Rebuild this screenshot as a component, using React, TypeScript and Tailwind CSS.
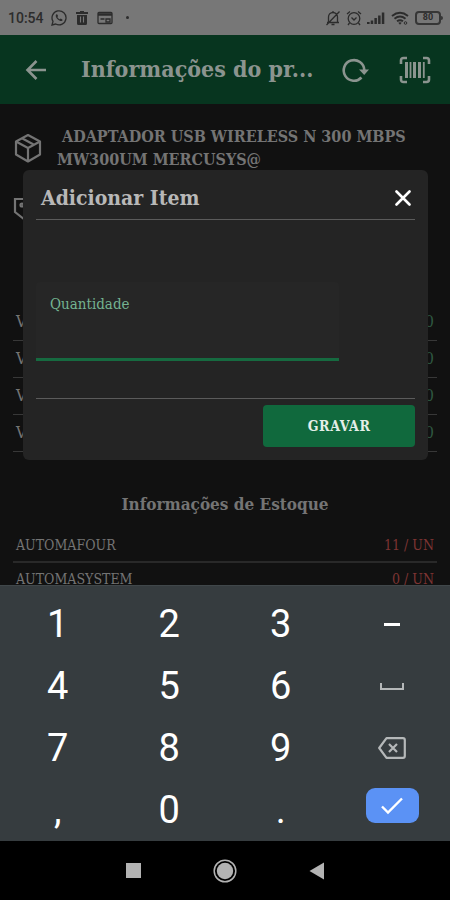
import React, { useState } from "react";

const PRICES = [
  { id: "p1", label: "Valor", value: "0,00" },
  { id: "p2", label: "Valor", value: "0,00" },
  { id: "p3", label: "Valor", value: "0,00" },
  { id: "p4", label: "Valor", value: "0,00" },
];

const STOCK = [
  { store: "AUTOMAFOUR", amount: "11 / UN" },
  { store: "AUTOMASYSTEM", amount: "0 / UN" },
];

const SLAB = "font-['DejaVu_Serif_Condensed','DejaVu_Serif',serif]";

function StatusBar() {
  return (
    <div className="flex h-[35px] shrink-0 items-center justify-between bg-[#777777] pl-2 pr-[7px] text-[#2c2c2c]">
      <div className="flex items-center">
        <span className="w-9 font-[Roboto,sans-serif] text-sm font-medium">10:54</span>
        <svg className="ml-[7px] h-4 w-4" viewBox="0 0 16 16" fill="none" stroke="currentColor" strokeWidth="1.3">
          <path d="M1 15l1-3.6A7 7 0 1 1 4.7 14z" />
          <path d="M5.3 4.300c-1.200 1.200-.5 3.300 1.300 5 1.800 1.700 3.700 2.400 4.900 1.200l-.1-1.100-1.700-.9-1 .8c-1-.4-1.900-1.300-2.300-2.300l.7-.9-.8-1.700z" fill="currentColor" stroke="none" />
        </svg>
        <svg className="ml-2 h-4 w-[14px]" viewBox="0 0 14 16" fill="currentColor">
          <path d="M5 1h4v1h4v2H1V2h4zM2 5h10v8.500q0 1.500-1.500 1.500h-7Q2 15 2 13.500z" />
          <path d="M5.500 6.500v6M8.500 6.500v6" stroke="#777777" strokeWidth="1.1" />
        </svg>
        <svg className="ml-2 h-[14px] w-4" viewBox="0 0 16 14" fill="none" stroke="currentColor" strokeWidth="1.3">
          <rect x="1" y="1.500" width="14" height="11" rx="1" />
          <path d="M1 3.500h14" strokeWidth="2.500" />
          <path d="M3.500 8h4M9 8h4v3H9z" />
        </svg>
        <span className="ml-[13px] h-[3px] w-[3px] rounded-full bg-[#2c2c2c]" />
      </div>
      <div className="flex items-center">
        <svg className="h-4 w-4" viewBox="0 0 16 16" fill="none" stroke="currentColor" strokeWidth="1.3">
          <path d="M2 12.500h12M3.500 12V7a4.500 4.500 0 0 1 9 0v5M8 1v1.500M6.500 14.500h3M1.500 15L14.500 1.500" />
        </svg>
        <svg className="ml-[5px] h-4 w-4" viewBox="0 0 16 16" fill="none" stroke="currentColor" strokeWidth="1.3">
          <circle cx="8" cy="8.500" r="5.800" />
          <path d="M1 4l3-2.500M15 4l-3-2.500M5.500 7.500L8 10l2.500-2.500M3.500 13L2 15M12.500 13l1.500 2" />
        </svg>
        <svg className="ml-[5px] h-4 w-[18px]" viewBox="0 0 18 16" fill="currentColor">
          <path d="M0 12h2.600v2H0zM3.700 10.500h2.500V14H3.700zM7.400 8h2.500v6H7.400zM11.100 5.500h2.500V14h-2.500zM14.800 2.500h2.500V14h-2.500z" />
        </svg>
        <svg className="ml-[6px] h-4 w-[18px]" viewBox="0 0 18 16" fill="none" stroke="currentColor" strokeWidth="1.900">
          <path d="M1 6q8-6.500 16 0M3.500 8.800q5.500-4.500 11 0M6 11.300q3-2.300 6 0" />
          <path d="M7.300 12.700q1.700-1 3.400 0L9 14.700z" fill="currentColor" stroke="none" />
          <circle cx="14.500" cy="13" r="1.300" strokeWidth="1" />
        </svg>
        <div className="ml-[6px] flex h-[14px] w-[26px] items-center justify-center rounded-[4px] border-2 border-[#363636] font-[Roboto,sans-serif] text-[9px] leading-none font-bold">
          80
        </div>
        <span className="h-1 w-[2px] rounded-r-sm bg-[#363636]" />
      </div>
    </div>
  );
}

function AppBar() {
  return (
    <header className="flex h-[69px] shrink-0 items-center bg-[#07351f] pl-[25px] pr-[19px] text-[#8b948f]">
      <button aria-label="Voltar" className="shrink-0">
        <svg className="h-[22px] w-[22px]" viewBox="0 0 22 22" fill="none" stroke="currentColor" strokeWidth="2.600">
          <path d="M21 11H3M11.500 2l-9 9 9 9" />
        </svg>
      </button>
      <h1 className="ml-[34px] min-w-0 flex-1 truncate text-[23px] font-bold">Informações do pr...</h1>
      <button aria-label="Atualizar" className="ml-6 shrink-0">
        <svg className="h-7 w-7" viewBox="0 0 28 28" fill="none" stroke="currentColor" strokeWidth="2.600">
          <path d="M20.500 21.500A10.300 10.300 0 1 1 23.300 14" />
          <path d="M18 13.500h10l-4.800 5.500z" fill="currentColor" stroke="none" />
        </svg>
      </button>
      <button aria-label="Ler código de barras" className="ml-[30px] shrink-0">
        <svg className="h-7 w-8" viewBox="0 0 32 28" fill="none" stroke="currentColor">
          <path d="M8 2H4.500Q2 2 2 4.500V8M24 2h3.500Q30 2 30 4.500V8M8 26H4.500Q2 26 2 23.500V20M24 26h3.500q2.500 0 2.500-2.500V20" strokeWidth="2.600" />
          <path d="M7.500 6v16M15.500 6v16M20.500 6v16" strokeWidth="3" />
          <path d="M11.500 6v16M24.800 6v16" strokeWidth="1.800" />
        </svg>
      </button>
    </header>
  );
}

function ProductPage() {
  return (
    <main className="min-h-0 flex-1 overflow-hidden bg-[#111111] px-[13px] pt-[21px] text-[#747474]">
      <div className="flex items-center">
        <svg className="h-[30px] w-[30px] shrink-0" viewBox="0 0 30 30" fill="none" stroke="currentColor" strokeWidth="2.200" strokeLinejoin="round">
          <path d="M15 2l12 6.500v13L15 28.500 3 21.500v-13zM3 8.500l12 6.500 12-6.500M15 15v13.500M9 5.200l12 6.500" />
        </svg>
        <p className="ml-[14px] whitespace-pre-wrap text-base leading-[23px] font-bold">
          {" ADAPTADOR USB WIRELESS N 300 MBPS MW300UM MERCUSYS@"}
        </p>
      </div>
      <svg className="mt-[25px] h-[30px] w-[30px]" viewBox="0 0 30 30" fill="none" stroke="currentColor" strokeWidth="2.200">
        <path d="M2 3h12l13 13-11 11L2 16z" />
        <circle cx="9" cy="9" r="1.500" />
      </svg>
      <dl className="mt-[78px] text-base">
        {PRICES.map((p) => (
          <div key={p.id} className="flex h-[37px] items-center justify-between border-b border-[#383838] px-[3px]">
            <dt>{p.label}</dt>
            <dd className="text-[#2f5942]">{p.value}</dd>
          </div>
        ))}
      </dl>
      <h2 className="mt-10 text-center text-[17px] leading-6 font-bold">Informações de Estoque</h2>
      <dl className="mt-[13px] text-sm">
        {STOCK.map((s) => (
          <div key={s.store} className="flex h-[34px] items-center justify-between border-b-2 border-[#292929] px-[3px]">
            <dt>{s.store}</dt>
            <dd className="text-[#7d3433]">{s.amount}</dd>
          </div>
        ))}
      </dl>
    </main>
  );
}

function AddItemDialog() {
  const [quantity, setQuantity] = useState("");

  return (
    <div className="absolute inset-0 flex items-start pt-[170px] pr-[22px] pl-[23px]">
      <form
        role="dialog"
        aria-labelledby="add-item-title"
        onSubmit={(e) => e.preventDefault()}
        className="w-full rounded-md bg-[#242424] px-[13px] pb-[13px]"
      >
        <div className="flex h-[50px] items-center justify-between border-b border-[#5b5b5b] pt-[6px] pl-[5px] pr-1">
          <h2 id="add-item-title" className="text-[21px] font-bold text-[#b8b8b8]">
            Adicionar Item
          </h2>
          <button type="button" aria-label="Fechar" className="text-white">
            <svg className="h-4 w-4" viewBox="0 0 16 16" fill="none" stroke="currentColor" strokeWidth="2.600" strokeLinecap="round">
              <path d="M1.500 1.500l13 13M14.500 1.500l-13 13" />
            </svg>
          </button>
        </div>
        <div className="mt-[62px] w-4/5 rounded-t bg-[#262626] pt-3">
          <label htmlFor="quantity" className="block pl-[14px] text-[15px] leading-5 text-[#74b391]">
            Quantidade
          </label>
          <input
            id="quantity"
            inputMode="numeric"
            value={quantity}
            onChange={(e) => setQuantity(e.target.value)}
            className="block h-[47px] w-full border-b-[3px] border-[#166a40] bg-transparent px-[14px] text-base text-white outline-none"
          />
        </div>
        <div className="mt-[37px] flex justify-end border-t border-[#5b5b5b] pt-[6px]">
          <button type="submit" className="h-[42px] w-2/5 rounded bg-[#10693d] text-sm font-bold tracking-wider text-[#e4eee8]">
            GRAVAR
          </button>
        </div>
      </form>
    </div>
  );
}

const KEY = "flex h-[62px] items-center justify-center";

function Keyboard() {
  return (
    <div className="grid shrink-0 grid-cols-4 border-t border-[#40474a] bg-[#363c3f] px-[2px] pt-[7px] font-[Roboto,sans-serif] text-[38px] text-white">
      <button className={KEY}>1</button>
      <button className={KEY}>2</button>
      <button className={KEY}>3</button>
      <button className={KEY} aria-label="Menos">
        <span className="h-[3px] w-4 bg-white" />
      </button>
      <button className={KEY}>4</button>
      <button className={KEY}>5</button>
      <button className={KEY}>6</button>
      <button className={KEY} aria-label="Espaço">
        <span className="h-[7px] w-6 border-2 border-t-0 border-[#b5b8b9]" />
      </button>
      <button className={KEY}>7</button>
      <button className={KEY}>8</button>
      <button className={KEY}>9</button>
      <button className={KEY} aria-label="Apagar">
        <svg className="h-[22px] w-7" viewBox="0 0 28 22" fill="none" stroke="#b5b8b9" strokeWidth="2.200" strokeLinejoin="round">
          <path d="M8.500 1.200H25q1.800 0 1.800 1.800v16q0 1.800-1.800 1.800H8.500L1.200 11z" />
          <path d="M11 7l8 8M19 7l-8 8" />
        </svg>
      </button>
      <button className={KEY}>,</button>
      <button className={KEY}>0</button>
      <button className={KEY}>.</button>
      <button className="flex h-[62px] items-start justify-center pt-[9px]" aria-label="Concluir">
        <span className="flex h-[35px] w-[53px] items-center justify-center rounded-[9px] bg-[#5b92f5]">
          <svg className="h-[18px] w-[22px]" viewBox="0 0 22 18" fill="none" stroke="#ffffff" strokeWidth="2.400">
            <path d="M1 9.500l6 6L21 1.500" />
          </svg>
        </span>
      </button>
    </div>
  );
}

function NavigationBar() {
  return (
    <nav className="flex h-[59px] shrink-0 items-center justify-center gap-[68px] bg-black text-[#b3b3b3]">
      <button aria-label="Recentes" className="flex w-6 justify-center">
        <span className="h-[15px] w-[15px] bg-[#b3b3b3]" />
      </button>
      <button aria-label="Início">
        <svg className="h-6 w-6" viewBox="0 0 24 24">
          <circle cx="12" cy="12" r="10.800" fill="none" stroke="currentColor" strokeWidth="1.500" />
          <circle cx="12" cy="12" r="8.200" fill="currentColor" />
        </svg>
      </button>
      <button aria-label="Voltar ao aplicativo anterior">
        <svg className="h-6 w-6" viewBox="0 0 24 24" fill="currentColor">
          <path d="M19 3.500v17L4.500 12z" />
        </svg>
      </button>
    </nav>
  );
}

export default function App() {
  return (
    <div className="flex h-screen flex-col overflow-hidden bg-black">
      <div className={`relative flex min-h-0 flex-1 flex-col overflow-hidden ${SLAB}`}>
        <StatusBar />
        <AppBar />
        <ProductPage />
        <AddItemDialog />
      </div>
      <Keyboard />
      <NavigationBar />
    </div>
  );
}
